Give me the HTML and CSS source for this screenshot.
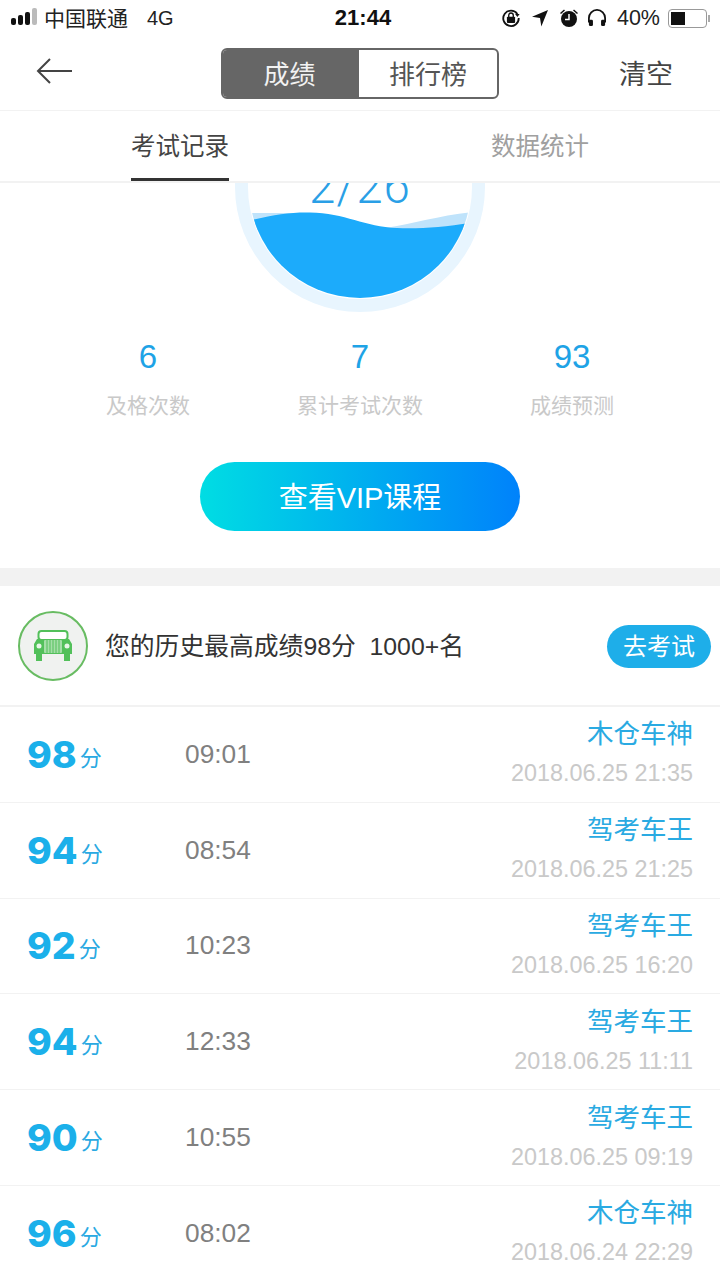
FILE: index.html
```html
<!DOCTYPE html>
<html lang="zh-CN">
<head>
    <meta charset="UTF-8">
    <meta name="viewport" content="width=device-width, initial-scale=1.0">
    <title>成绩</title>
    <link rel="stylesheet" href="styles.css">
</head>
<body>
<div class="phone">
    <div class="status-bar">
        <div class="status-left">
            <span class="signal"><i></i><i></i><i></i><i class="off"></i></span>
            <span class="carrier">中国联通</span>
            <span class="network">4G</span>
        </div>
        <div class="status-time">21:44</div>
        <div class="status-right">
            <svg class="status-icon" width="20" height="20" viewBox="0 0 22 22" fill="none" stroke="#111" stroke-width="2">
                <path d="M18 6.5A8.5 8.5 0 1 0 19.5 11"></path>
                <path d="M15.5 6.5h5l-2.5 3.5z" fill="#111" stroke="none"></path>
                <rect x="6.5" y="9.5" width="9" height="7" rx="1" fill="#111" stroke="none"></rect>
                <path d="M8.5 10V8a2.5 2.5 0 0 1 5 0v2" stroke-width="1.5"></path>
            </svg>
            <svg class="status-icon" width="16" height="18" viewBox="0 0 18 20">
                <path d="M18 1L10.5 19.5 9 10 0 8.5z" fill="#111"></path>
            </svg>
            <svg class="status-icon icon-alarm" width="20" height="20" viewBox="0 0 20 20" fill="#111">
                <circle cx="10" cy="11" r="8"></circle>
                <path d="M1 5l4-3.5 1 1-4 3.5zM19 5l-4-3.5-1 1 4 3.5z"></path>
                <path d="M10 6v5.5H6" fill="none" stroke="#fff" stroke-width="1.5"></path>
            </svg>
            <svg class="status-icon icon-phones" width="20" height="18" viewBox="0 0 22 20" fill="none" stroke="#111" stroke-width="2">
                <path d="M2 15v-5a9 9 0 0 1 18 0v5"></path>
                <rect x="2" y="12" width="4.5" height="7" rx="1.5" fill="#111" stroke="none"></rect>
                <rect x="15.5" y="12" width="4.5" height="7" rx="1.5" fill="#111" stroke="none"></rect>
            </svg>
            <span class="battery-text">40%</span>
            <span class="battery"><span class="battery-level"></span></span>
            <span class="battery-cap"></span>
        </div>
    </div>

    <header class="nav">
        <svg class="back" width="36" height="26" viewBox="0 0 36 26" fill="none" stroke="#444" stroke-width="2">
            <path d="M14 1L2 13l12 12"></path>
            <path d="M2 13h34"></path>
        </svg>
        <div class="segment">
            <span class="segment-item active">成绩</span>
            <span class="segment-item">排行榜</span>
        </div>
        <span class="clear">清空</span>
    </header>

    <nav class="tabs">
        <div class="tab active"><span>考试记录</span></div>
        <div class="tab"><span>数据统计</span></div>
    </nav>

    <main class="scroller">
        <svg class="gauge" width="250" height="250" viewBox="0 0 250 250">
            <defs>
                <clipPath id="water-clip"><circle cx="125" cy="125" r="111"></circle></clipPath>
            </defs>
            <circle cx="125" cy="125" r="118.5" fill="none" stroke="#e8f5fe" stroke-width="13"></circle>
            <text class="gauge-text" x="125" y="141" text-anchor="middle">2/26</text>
            <g clip-path="url(#water-clip)">
                <path d="M10 151H80C110 155 130 165 150 166C180 162 205 153 240 150V175H10z" fill="#bfe3fb"></path>
                <path d="M10 160C35 153 55 150 75 150.5C110 151 130 165 162 166C185 167 210 165 240 160V250H0V160z" fill="#1cabfb"></path>
            </g>
        </svg>

        <section class="stats">
            <div class="stat"><div class="stat-num">6</div><div class="stat-label">及格次数</div></div>
            <div class="stat"><div class="stat-num">7</div><div class="stat-label">累计考试次数</div></div>
            <div class="stat"><div class="stat-num">93</div><div class="stat-label">成绩预测</div></div>
        </section>

        <div class="vip-wrap"><a class="vip-button">查看VIP课程</a></div>

        <section class="best">
            <div class="car-badge">
                <svg width="40" height="32" viewBox="0 0 40 32">
                    <rect x="5.5" y="1" width="29" height="9" rx="3" fill="#fff" stroke="#52c05a" stroke-width="2"></rect>
                    <path d="M4 9h32l3 5v10H1V14z" fill="#52c05a"></path>
                    <rect x="11" y="10" width="18" height="13" rx="1" fill="#a5dea8"></rect>
                    <path d="M14 10v13M17 10v13M20 10v13M23 10v13M26 10v13" stroke="#52c05a" stroke-width="1"></path>
                    <circle cx="6" cy="16" r="2.5" fill="#e8f6e8"></circle>
                    <circle cx="34" cy="16" r="2.5" fill="#e8f6e8"></circle>
                    <rect x="3" y="24" width="6" height="7" fill="#52c05a"></rect>
                    <rect x="31" y="24" width="6" height="7" fill="#52c05a"></rect>
                </svg>
            </div>
            <p class="best-text">您的历史最高成绩98分&nbsp; 1000+名</p>
            <a class="go-exam">去考试</a>
        </section>

        <ul class="records">
            <li class="record">
                <div class="score"><b>98</b><span>分</span></div>
                <div class="duration">09:01</div>
                <div class="record-info"><div class="rank">木仓车神</div><div class="date">2018.06.25 21:35</div></div>
            </li>
            <li class="record">
                <div class="score"><b>94</b><span>分</span></div>
                <div class="duration">08:54</div>
                <div class="record-info"><div class="rank">驾考车王</div><div class="date">2018.06.25 21:25</div></div>
            </li>
            <li class="record">
                <div class="score"><b>92</b><span>分</span></div>
                <div class="duration">10:23</div>
                <div class="record-info"><div class="rank">驾考车王</div><div class="date">2018.06.25 16:20</div></div>
            </li>
            <li class="record">
                <div class="score"><b>94</b><span>分</span></div>
                <div class="duration">12:33</div>
                <div class="record-info"><div class="rank">驾考车王</div><div class="date">2018.06.25 11:11</div></div>
            </li>
            <li class="record">
                <div class="score"><b>90</b><span>分</span></div>
                <div class="duration">10:55</div>
                <div class="record-info"><div class="rank">驾考车王</div><div class="date">2018.06.25 09:19</div></div>
            </li>
            <li class="record">
                <div class="score"><b>96</b><span>分</span></div>
                <div class="duration">08:02</div>
                <div class="record-info"><div class="rank">木仓车神</div><div class="date">2018.06.24 22:29</div></div>
            </li>
        </ul>
    </main>
</div>
</body>
</html>
```

FILE: styles.css
```css
:root {
    --color-blue: #1bb0ea;
    --color-text: #444;
    --color-grey: #808080;
    --color-light: #c9c9c9;
    --color-line: #f2f2f2;
    --font-sans: "Liberation Sans", "Noto Sans CJK SC", sans-serif;
}

* {
    box-sizing: border-box;
    margin: 0;
    padding: 0;
}

html, body {
    height: 100%;
    overflow: hidden;
}

body {
    font-family: var(--font-sans);
    color: var(--color-text);
    background-color: #fff;
}

.phone {
    width: 720px;
    height: 1280px;
    display: flex;
    flex-direction: column;
    overflow: hidden;
}

/* status bar */
.status-bar {
    height: 36px;
    flex: none;
    display: grid;
    grid-template-columns: 1fr auto 1fr;
    align-items: center;
    color: #222;
}

.status-left {
    display: flex;
    align-items: center;
    padding: 0 0 3px 11px;
    font-size: 21px;
}

.signal {
    display: flex;
    align-items: flex-end;
    gap: 2px;
    width: 28px;
    height: 17px;
    margin-right: 5px;
}

.signal i {
    width: 5px;
    border-radius: 2px;
    background-color: #111;
}

.signal i:nth-child(1) { height: 7px; }
.signal i:nth-child(2) { height: 10px; }
.signal i:nth-child(3) { height: 13px; }
.signal i:nth-child(4) { height: 17px; }

.signal i.off {
    background-color: #bbb;
}

.network {
    margin: 4px 0 0 19px;
    font-size: 20px;
}

.status-time {
    margin-left: 6px;
    font-size: 22px;
    font-weight: 700;
    color: #111;
}

.status-right {
    display: flex;
    align-items: center;
    justify-content: flex-end;
    padding-right: 10px;
}

.status-icon {
    margin-right: 11px;
}

.icon-alarm {
    margin-right: 8px;
}

.icon-phones {
    margin-right: 10px;
}

.battery-text {
    font-size: 21.5px;
    margin-right: 8px;
}

.battery {
    width: 39px;
    height: 19px;
    padding: 2px;
    border: 1.5px solid #999;
    border-radius: 4px;
}

.battery-level {
    display: block;
    width: 14px;
    height: 100%;
    background-color: #111;
}

.battery-cap {
    width: 2px;
    height: 7px;
    margin-left: 1px;
    background-color: #aaa;
}

/* nav bar */
.nav {
    height: 75px;
    flex: none;
    position: relative;
    display: flex;
    align-items: center;
    justify-content: center;
    border-bottom: 1px solid var(--color-line);
}

.back {
    position: absolute;
    left: 36px;
    top: 22px;
}

.segment {
    display: flex;
    width: 278px;
    height: 51px;
    margin-top: 1px;
    border: 2px solid #666;
    border-radius: 6px;
    overflow: hidden;
}

.segment-item {
    flex: 1;
    display: flex;
    align-items: center;
    justify-content: center;
    padding-bottom: 3px;
    font-size: 26px;
    color: #555;
}

.segment-item.active {
    flex: none;
    width: 136px;
    padding-right: 3px;
    background-color: #666;
    color: #f2f2f2;
}

.clear {
    position: absolute;
    right: 47px;
    top: 17px;
    font-size: 27px;
    color: var(--color-text);
}

/* tabs */
.tabs {
    height: 72px;
    flex: none;
    display: flex;
    border-bottom: 2px solid var(--color-line);
}

.tab {
    flex: 1;
    display: flex;
    justify-content: center;
    font-size: 24.5px;
    color: #a0a0a0;
}

.tab span {
    display: block;
    height: 70px;
    line-height: 72px;
}

.tab.active {
    color: var(--color-text);
}

.tab.active span {
    border-bottom: 3px solid #333;
}

/* scrolled content */
.scroller {
    flex: 1;
    overflow: hidden;
}

.gauge {
    display: block;
    margin: -121px auto 0;
}

.gauge-text {
    font-family: Roboto, sans-serif;
    font-size: 47.5px;
    font-weight: 300;
    fill: #2a9fe6;
    letter-spacing: 1px;
}

.stats {
    display: grid;
    grid-template-columns: repeat(3, 1fr);
    padding: 24px 42px 0;
    text-align: center;
}

.stat-num {
    height: 42px;
    line-height: 42px;
    font-size: 33px;
    color: #1ea3e6;
}

.stat-label {
    margin-top: 13px;
    height: 30px;
    line-height: 30px;
    font-size: 21px;
    color: var(--color-light);
}

.vip-wrap {
    padding: 41px 0 37px;
    display: flex;
    justify-content: center;
    border-bottom: 18px solid var(--color-line);
}

.vip-button {
    width: 320px;
    height: 69px;
    line-height: 72px;
    border-radius: 35px;
    text-align: center;
    font-size: 29px;
    color: #fff;
    background-image: linear-gradient(90deg, #00dde3, #0082fb);
}

/* best score */
.best {
    height: 121px;
    display: flex;
    align-items: center;
    padding: 0 9px 0 18px;
    border-bottom: 2px solid var(--color-line);
}

.car-badge {
    width: 70px;
    height: 70px;
    margin-top: 1px;
    flex: none;
    display: flex;
    align-items: center;
    justify-content: center;
    border: 2px solid #68bc62;
    border-radius: 50%;
    background-color: #f0f2f0;
}

.best-text {
    flex: 1;
    margin: 0 0 3px 17px;
    font-size: 24.8px;
    color: #333;
}

.go-exam {
    width: 104px;
    height: 43px;
    margin-top: 1px;
    line-height: 43px;
    border-radius: 22px;
    text-align: center;
    font-size: 24px;
    color: #fff;
    background-color: #1eaee9;
}

/* record list */
.records {
    list-style: none;
}

.record {
    height: 95.8px;
    display: flex;
    align-items: center;
    padding: 0 27px;
    border-bottom: 1px solid var(--color-line);
}

.score {
    width: 158px;
    color: var(--color-blue);
}

.score b {
    font-family: Inter, var(--font-sans);
    font-size: 37.5px;
    font-weight: 800;
}

.score span {
    margin-left: 3px;
    font-size: 22px;
    line-height: 1;
    vertical-align: 2px;
    color: #2aa9e2;
}

.duration {
    flex: 1;
    font-size: 26.3px;
    color: var(--color-grey);
}

.record-info {
    text-align: right;
}

.rank {
    height: 38px;
    line-height: 36px;
    font-size: 26.5px;
    color: #2aaae2;
}

.date {
    height: 38px;
    line-height: 38px;
    font-size: 23.4px;
    color: var(--color-light);
}
```
